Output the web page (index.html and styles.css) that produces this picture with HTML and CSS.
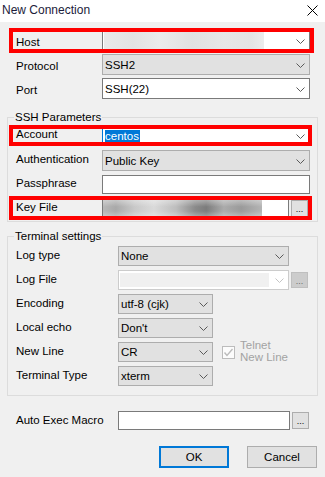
FILE: index.html
```html
<!DOCTYPE html>
<html>
<head>
<meta charset="utf-8">
<link rel="stylesheet" href="styles.css">
</head>
<body>
<div class="titlebar">
  <span class="title">New Connection</span>
  <svg class="close" width="11" height="11" viewBox="0 0 11 11"><path d="M0.5 0.5L10.5 10.5M10.5 0.5L0.5 10.5" stroke="#000" stroke-width="1" fill="none"/></svg>
</div>

<div class="rows top">
  <div class="row mark mark-host">
    <span class="lbl">Host</span>
    <div class="combo edit w208"><span class="blur blur-host"></span><span class="val"></span><svg class="chev" viewBox="0 0 9 5"><polyline points="0.5,0.5 4.5,4.5 8.5,0.5" fill="none" stroke="#5a5a5a"/></svg></div>
  </div>
  <div class="row">
    <span class="lbl">Protocol</span>
    <div class="combo w208"><span class="val">SSH2</span><svg class="chev" viewBox="0 0 9 5"><polyline points="0.5,0.5 4.5,4.5 8.5,0.5" fill="none" stroke="#5a5a5a"/></svg></div>
  </div>
  <div class="row">
    <span class="lbl">Port</span>
    <div class="combo edit w208"><span class="val">SSH(22)</span><svg class="chev" viewBox="0 0 9 5"><polyline points="0.5,0.5 4.5,4.5 8.5,0.5" fill="none" stroke="#5a5a5a"/></svg></div>
  </div>
</div>

<fieldset class="group ssh">
  <legend>SSH Parameters</legend>
  <div class="rows">
    <div class="row mark mark-account">
      <span class="lbl">Account</span>
      <div class="combo edit focus w208"><span class="val"><span class="sel">centos</span></span><svg class="chev" viewBox="0 0 9 5"><polyline points="0.5,0.5 4.5,4.5 8.5,0.5" fill="none" stroke="#5a5a5a"/></svg></div>
    </div>
    <div class="row">
      <span class="lbl">Authentication</span>
      <div class="combo w208"><span class="val">Public Key</span><svg class="chev" viewBox="0 0 9 5"><polyline points="0.5,0.5 4.5,4.5 8.5,0.5" fill="none" stroke="#5a5a5a"/></svg></div>
    </div>
    <div class="row r19">
      <span class="lbl">Passphrase</span>
      <div class="field w208"></div>
    </div>
    <div class="row r19 mark mark-key">
      <span class="lbl">Key File</span>
      <div class="field w187"><span class="blur blur-key"></span></div>
      <div class="dots">...</div>
    </div>
  </div>
</fieldset>

<fieldset class="group term">
  <legend>Terminal settings</legend>
  <div class="rows">
    <div class="row r20">
      <span class="lbl">Log type</span>
      <div class="combo w171"><span class="val">None</span><svg class="chev" viewBox="0 0 9 5"><polyline points="0.5,0.5 4.5,4.5 8.5,0.5" fill="none" stroke="#5a5a5a"/></svg></div>
    </div>
    <div class="row r20">
      <span class="lbl">Log File</span>
      <div class="combo disabled w171"><span class="fill"></span><svg class="chev" viewBox="0 0 9 5"><polyline points="0.5,0.5 4.5,4.5 8.5,0.5" fill="none" stroke="#c4c4c4"/></svg></div>
      <div class="dots off">...</div>
    </div>
    <div class="row r20">
      <span class="lbl">Encoding</span>
      <div class="combo w95"><span class="val">utf-8 (cjk)</span><svg class="chev" viewBox="0 0 9 5"><polyline points="0.5,0.5 4.5,4.5 8.5,0.5" fill="none" stroke="#5a5a5a"/></svg></div>
    </div>
    <div class="row r20">
      <span class="lbl">Local echo</span>
      <div class="combo w95"><span class="val">Don't</span><svg class="chev" viewBox="0 0 9 5"><polyline points="0.5,0.5 4.5,4.5 8.5,0.5" fill="none" stroke="#5a5a5a"/></svg></div>
    </div>
    <div class="row r20">
      <span class="lbl">New Line</span>
      <div class="combo w95"><span class="val">CR</span><svg class="chev" viewBox="0 0 9 5"><polyline points="0.5,0.5 4.5,4.5 8.5,0.5" fill="none" stroke="#5a5a5a"/></svg></div>
      <span class="check"><svg width="11" height="11" viewBox="0 0 11 11"><polyline points="1.5,5.5 4,8.5 9.5,2" fill="none" stroke="#bcbcbc" stroke-width="1.4"/></svg></span>
      <span class="checklbl">Telnet<br>New Line</span>
    </div>
    <div class="row r20">
      <span class="lbl">Terminal Type</span>
      <div class="combo w95"><span class="val">xterm</span><svg class="chev" viewBox="0 0 9 5"><polyline points="0.5,0.5 4.5,4.5 8.5,0.5" fill="none" stroke="#5a5a5a"/></svg></div>
    </div>
  </div>
</fieldset>

<div class="row r19 macro">
  <span class="lbl">Auto Exec Macro</span>
  <div class="field w172"></div>
  <div class="dots">...</div>
</div>

<div class="buttons">
  <div class="btn default">OK</div>
  <div class="btn">Cancel</div>
</div>
</body>
</html>
```

FILE: styles.css
```css
* { box-sizing: border-box; }
html, body { margin: 0; padding: 0; }
body {
  width: 325px;
  height: 477px;
  overflow: hidden;
  background: #f0f0f0;
  font-family: "Liberation Sans", Arial, sans-serif;
  font-size: 11.5px;
  color: #000;
}

.titlebar {
  height: 22px;
  background: #fff;
  display: flex;
  align-items: center;
  justify-content: space-between;
  padding: 0 7px 2px 2px;
}
.title { font-size: 12px; color: #1b1b3a; line-height: 14px; }
.close { display: block; }

.rows {
  display: flex;
  flex-direction: column;
  align-items: flex-start;
  gap: 4px;
}
.top { margin-top: 8px; padding-left: 16px; gap: 3px; }

.row {
  display: flex;
  align-items: center;
  height: 21px;
  position: relative;
  white-space: nowrap;
}
.r19 { height: 19px; }
.r20 { height: 20px; }

.lbl { flex: none; line-height: 14px; }
.top .lbl { width: 86px; padding-top: 3px; }
.ssh .lbl { width: 86px; padding-bottom: 3px; }
.term .lbl, .macro .lbl { width: 102px; padding-bottom: 2px; }

.combo {
  display: flex;
  align-items: center;
  height: 100%;
  border: 1px solid #adadad;
  background: #e1e1e1;
  padding-left: 2px;
  flex: none;
}
.combo .val { flex: 1; line-height: 14px; }
.combo .chev { flex: none; width: 9px; height: 5px; margin: 1px 4px 0 0; display: block; }
.combo.edit { background: #fff; border-color: #7a7a7a; }
.combo.focus { border-color: #0078d7; }
.combo.disabled { background: #fff; border-color: #cccccc; padding: 2px 0 2px 1px; }
.combo .fill { flex: 1; align-self: stretch; background: #f0f0f0; margin-right: 6px; }

.sel {
  display: inline-block;
  background: #0078d7;
  color: #fff;
  line-height: 12px;
  padding: 0 1px 0 0;
}

.blur { flex: none; align-self: stretch; }
.blur-host {
  width: 160px;
  margin-left: -1px;
  background: linear-gradient(90deg, #e9e9e9 0%, #e3e3e3 18%, #ebebeb 35%, #e1e1e1 55%, #e7e7e7 75%, #e4e4e4 92%, #ececec 100%);
}
.blur-key {
  display: block;
  width: 159px;
  height: 100%;
  background:
    linear-gradient(180deg, rgba(255,255,255,0.35) 0%, rgba(255,255,255,0) 40%, rgba(255,255,255,0) 65%, rgba(255,255,255,0.3) 100%),
    linear-gradient(90deg, #b8b8b8 0%, #a9a9a9 8%, #c9c9c9 20%, #dadada 32%, #bdbdbd 46%, #8a8a8a 58%, #7c7c7c 65%, #ababab 76%, #9a9a9a 87%, #b4b4b4 100%);
}

.w208 { width: 208px; }
.w187 { width: 187px; }
.w172 { width: 172px; }
.w171 { width: 171px; }
.w95 { width: 95px; }

.field {
  flex: none;
  height: 100%;
  background: #fff;
  border: 1px solid #7a7a7a;
}

.dots {
  flex: none;
  width: 17px;
  height: 17px;
  margin-left: 2px;
  border: 1px solid #adadad;
  background: #e1e1e1;
  font-size: 9px;
  line-height: 17px;
  text-align: center;
  color: #000;
}
.dots.off { height: 16px; background: #cccccc; border-color: #bfbfbf; color: #6d6d6d; line-height: 16px; }

.mark::after {
  content: "";
  position: absolute;
  border: 4px solid #ff0000;
  pointer-events: none;
}
.mark-host::after { top: -2px; bottom: -2px; left: -7px; right: -4px; }
.mark-account::after { top: 0; bottom: 0; left: -7px; right: -2px; }
.mark-key::after { top: -3px; bottom: -2px; left: -7px; right: -4px; }

.group {
  width: 311px;
  margin: 0 0 0 7px;
  border: 1px solid #dcdcdc;
  min-inline-size: 0;
}
.group legend {
  padding: 0 1px;
  margin-left: -2px;
  line-height: 14px;
}
.ssh { margin-top: 11px; padding: 0 0 3px 8px; }
.ssh .rows { margin-top: 1px; }
.ssh .r19.mark-key { margin-top: 1px; }
.term { margin-top: 7px; padding: 0 0 9px 8px; }
.term .rows { margin-top: 3px; }

.check {
  flex: none;
  width: 13px;
  height: 13px;
  margin-left: 9px;
  border: 1px solid #bcbcbc;
  background: #fcfcfc;
  display: flex;
  align-items: center;
  justify-content: center;
}
.check svg { display: block; }
.checklbl {
  margin-left: 5px;
  margin-top: -2px;
  line-height: 12px;
  color: #a3a3a3;
}

.macro { margin-top: 15px; padding-left: 16px; }

.buttons {
  display: flex;
  justify-content: flex-end;
  gap: 18px;
  margin-top: 16px;
  padding-right: 8px;
}
.btn {
  width: 70px;
  height: 22px;
  border: 1px solid #adadad;
  background: #e1e1e1;
  display: flex;
  align-items: center;
  justify-content: center;
  line-height: 14px;
}
.btn.default { border: 2px solid #0078d7; }
```
